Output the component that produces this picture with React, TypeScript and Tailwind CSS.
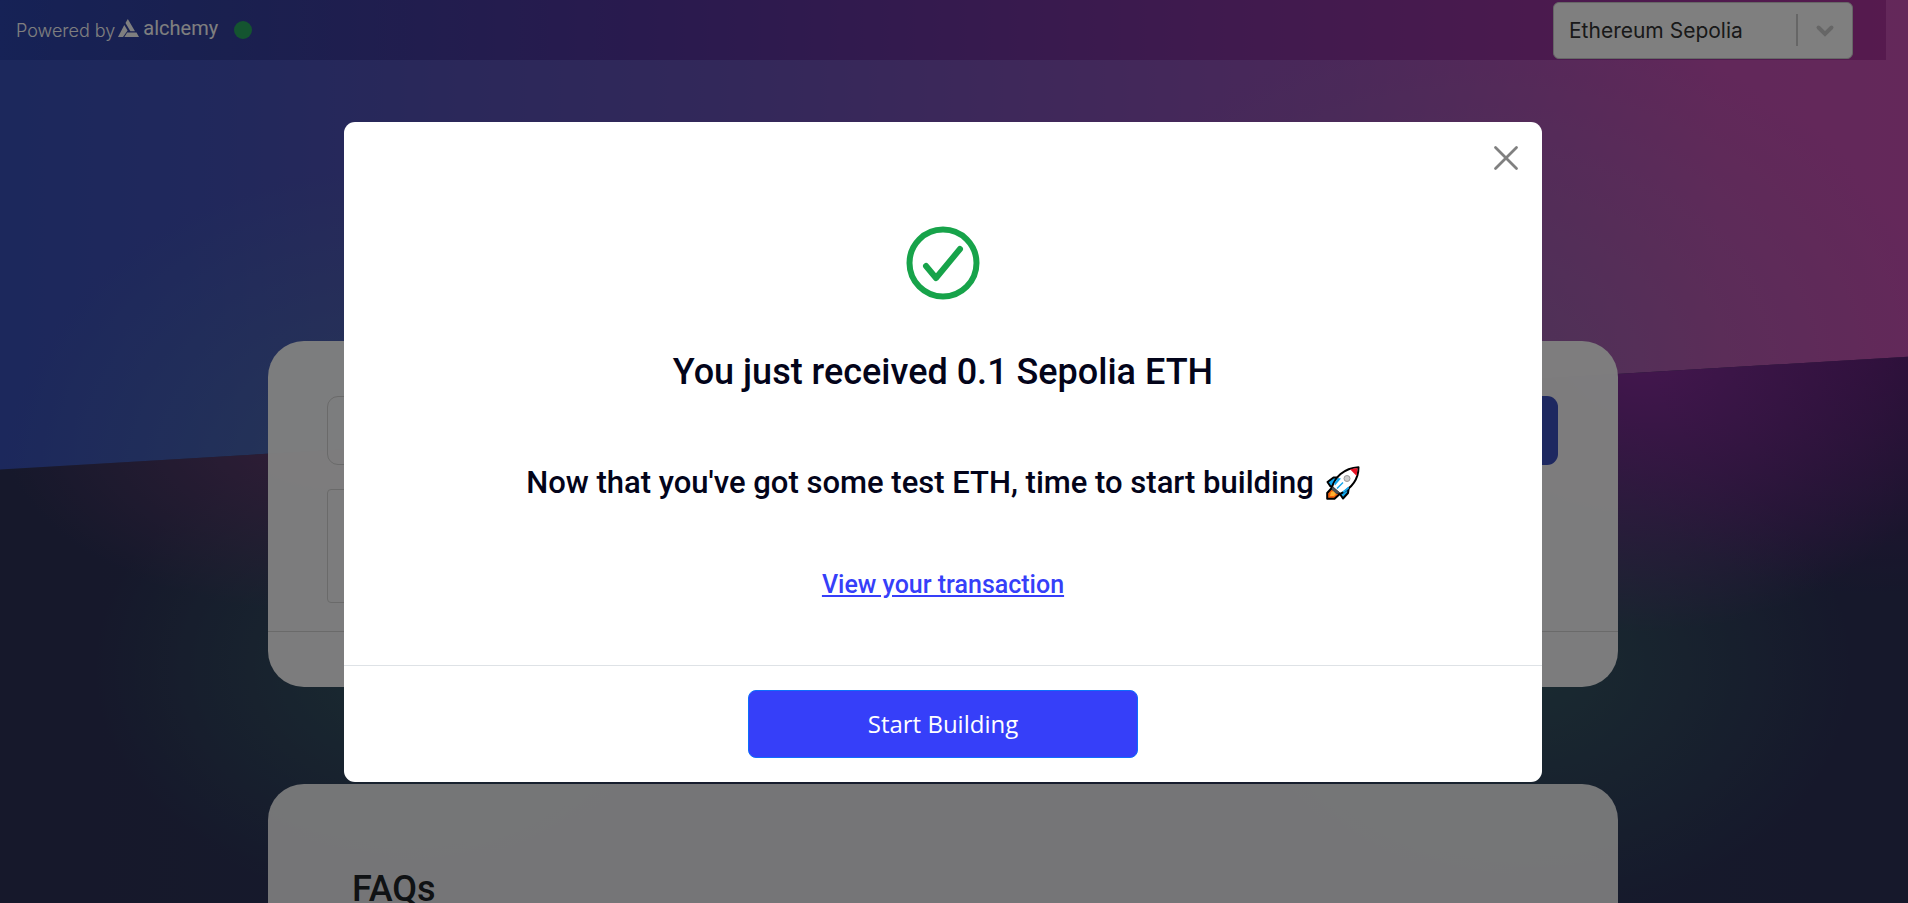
import { X } from "lucide-react";

function AlchemyMark() {
  return (
    <svg width="21" height="18" viewBox="0 0 21 18" fill="#fff" aria-hidden="true">
      <path d="M9.800 0l7.200 12.300h-4.600L7.500 4z" />
      <path d="M6.300 6l3.300 5.600L5 18H0z" />
      <path d="M9.200 13.600h9.300L21 18H6.400z" />
    </svg>
  );
}

function Rocket() {
  return (
    <svg width="34" height="34" viewBox="0 0 34 34" role="img" aria-label="rocket">
      <path d="M1.500 16l6-4.500h6L8 20.500H4.500z M14 28l9-8-1 7-5 5.500z" fill="#13a6ec" stroke="#000" strokeWidth="2" strokeLinejoin="round" />
      <path d="M1.200 32.800V27l4.500-5 7.500 6.500-4.700 4.300z" fill="#f7630c" stroke="#000" strokeWidth="2" strokeLinejoin="round" />
      <path d="M4 30l1-4 3-1 2 3-2 2z" fill="#ffb02e" />
      <path d="M6 21C9 12 17 2 32.500 1.200 32.500 14 24 23 14 28z" fill="#fff" stroke="#000" strokeWidth="2" strokeLinejoin="round" />
      <path d="M24 3.300l7.500-1.200-.8 8z" fill="#e81224" />
      <path d="M6.800 20.500l7.200 6.500-3.500 1-5-4.500z" fill="#4a4f55" />
      <path d="M8 17.500l4-5.500 3 .5-6 7z M16.500 25.500l6-5 .5 2-5 4.500z" fill="#13a6ec" />
      <path d="M11 22.500l6-6" stroke="#13a6ec" strokeWidth="1.500" />
      <circle cx="21" cy="12.500" r="3" fill="#ccc" stroke="#999" />
    </svg>
  );
}

function Background() {
  return (
    <div aria-hidden="true" className="absolute inset-0">
      <div className="absolute inset-0 bg-[radial-gradient(ellipse_20%_36%_at_20%_54%,#4a80a8a0,transparent),radial-gradient(ellipse_24%_40%_at_78%_42%,#8a7aa880,transparent),linear-gradient(to_right,#3850b8,#4050b8_10%,#5650b4_24%,#6450b4_37%,#7850b4_50%,#9650b4_70%,#c450b4_90%,#c850b4)]" />
      <div className="absolute inset-0 bg-[radial-gradient(ellipse_18%_20%_at_18%_48%,#683c70,transparent),radial-gradient(ellipse_18%_32%_at_86%_38%,#8c2ca0,transparent),radial-gradient(ellipse_16%_30%_at_98%_36%,#601474c0,transparent),radial-gradient(ellipse_16%_26%_at_21%_74%,#345662,transparent),radial-gradient(ellipse_17%_28%_at_80%_74%,#345662,transparent),linear-gradient(to_right,#2c3056,#2c3a5c_50%,#2c3056)] [clip-path:polygon(0_52%,100%_39.500%,100%_100%,0_100%)]" />
    </div>
  );
}

function Header() {
  return (
    <header className="flex h-[60px] items-center justify-between bg-[linear-gradient(to_right,#2c44ac,#34409e_12%,#54349c_35%,#80349c_65%,#ac349c)] pl-4 pr-[33px]">
      <div className="flex items-center text-white">
        <span className="text-[18px] font-light">Powered by</span>
        <a href="#alchemy" className="mb-1 ml-[3px] flex items-center gap-1 text-[20px] leading-6 text-white">
          <AlchemyMark />
          <span className="font-['Roboto',sans-serif]">alchemy</span>
        </a>
        <span className="ml-4 size-[18px] rounded-full bg-[#28a860]" />
      </div>
      <div className="flex h-[57px] w-[300px] items-center rounded-md border border-[#ccc] bg-white">
        <select aria-label="Network" className="h-full min-w-0 flex-1 appearance-none bg-transparent pl-[15px] pt-0.5 text-[21px] leading-8 text-[#333]">
          <option>Ethereum Sepolia</option>
        </select>
        <span className="h-8 w-0.5 bg-[#ccc]" />
        <svg className="mx-[17px]" width="20" height="20" viewBox="0 0 20 20" fill="none" stroke="#ccc" strokeWidth="4" strokeLinecap="round" aria-hidden="true">
          <path d="M3.500 7.500l6.500 6.500 6.500-6.500" />
        </svg>
      </div>
    </header>
  );
}

function SuccessDialog() {
  return (
    <div className="absolute inset-0 bg-black/50 pr-[22px]">
      <section role="dialog" aria-modal="true" aria-labelledby="dialog-title" className="mx-auto mt-[122px] w-full max-w-[1198px] rounded-[11px] bg-white font-['Roboto',sans-serif] font-medium text-[#03041a]">
        <div className="flex h-[72px] items-center justify-end pr-[15px]">
          <button type="button" aria-label="Close" className="text-[#808080]">
            <X size={42} strokeWidth={1.6} />
          </button>
        </div>
        <div className="flex flex-col items-center pb-16 pt-8">
          <svg width="74" height="74" viewBox="0 0 74 74" fill="none" stroke="#17a34a" strokeWidth="6" strokeLinecap="round" strokeLinejoin="round" aria-hidden="true">
            <circle cx="37" cy="37" r="33.500" />
            <path d="M20 40l10 12 24-29" />
          </svg>
          <h1 id="dialog-title" className="mt-12 text-[36px] leading-12">You just received 0.1 Sepolia ETH</h1>
          <h2 className="mt-[63px] flex items-center gap-3 text-[31px] leading-12">
            <span>Now that you've got some test ETH, time to start building</span>
            <Rocket />
          </h2>
          <a href="#transaction" className="mt-[62px] text-[25px] leading-8 text-[#363ff9] underline underline-offset-2">View your transaction</a>
        </div>
        <footer className="flex justify-center border-t border-[#dee2e6] py-6">
          <button type="button" className="h-[68px] w-[390px] rounded-lg border border-[#0d6efd] bg-[#363ff9] font-['Open_Sans',sans-serif] text-[24px] font-normal text-white">
            Start Building
          </button>
        </footer>
      </section>
    </div>
  );
}

export default function App() {
  return (
    <div className="relative h-screen overflow-hidden font-['Inter',sans-serif]">
      <Background />
      <div className="relative pr-[22px]">
        <Header />
        <main className="mx-auto mt-[281px] max-w-[1350px]">
          <section className="rounded-[36px] bg-white/97">
            <div className="pb-[28px] pl-[59px] pr-[60px] pt-[55px]">
              <div className="flex justify-between gap-5">
                <input aria-label="Wallet address" className="h-[69px] flex-1 rounded-[11px] border border-[#d4d4d4] bg-transparent" />
                <button type="button" aria-label="Send me ETH" className="h-[69px] w-56 rounded-[11px] bg-[#3c50c0]" />
              </div>
              <div className="mt-6 h-[114px] w-[400px] rounded-[4px] border border-[#d4d4d4]" />
            </div>
            <div className="h-[56px] border-t border-[#d4d4d4]" />
          </section>
          <section className="mt-[97px] h-[400px] rounded-[36px] bg-white/90 px-[84px] pt-[82px]">
            <h2 className="font-['Roboto',sans-serif] text-[36px] font-medium leading-[46px] text-[#212529]">FAQs</h2>
          </section>
        </main>
      </div>
      <SuccessDialog />
    </div>
  );
}
